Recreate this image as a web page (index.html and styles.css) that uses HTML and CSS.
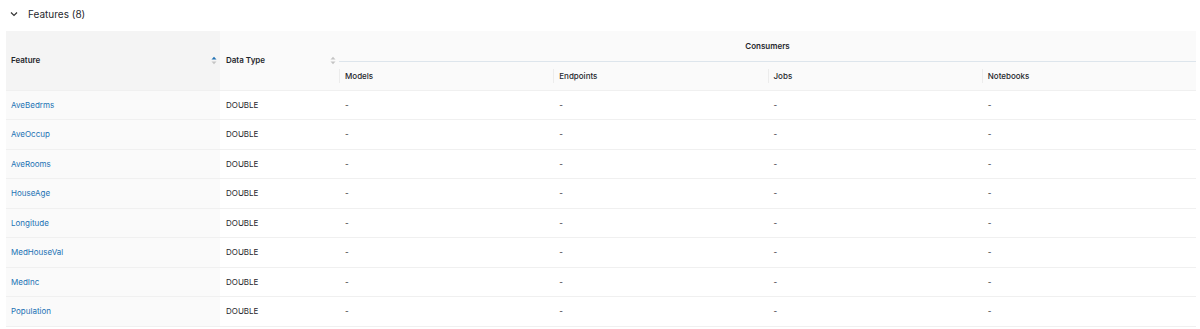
FILE: index.html
```html
<!DOCTYPE html>
<html lang="en">
<head>
  <meta charset="UTF-8">
  <meta name="viewport" content="width=device-width, initial-scale=1.0">
  <title>Features</title>
  <link rel="stylesheet" href="styles.css">
</head>
<body>
  <div class="section-head">
    <svg class="chevron" width="8" height="6" viewBox="0 0 8 6"><path d="M1 1.5 L4 4.5 L7 1.5" fill="none" stroke="#333" stroke-width="1.2"/></svg>
    <span>Features (8)</span>
  </div>

  <table class="features">
    <thead>
      <tr class="head-top">
        <th rowspan="2" class="col-feature sorted">
          <div class="th-inner">Feature
            <svg class="sorter" width="6" height="9" viewBox="0 0 6 9"><path d="M0.5 3.5 L3 0.8 L5.5 3.5 Z" fill="#2272b4"/><path d="M0.5 5.5 L3 8.2 L5.5 5.5 Z" fill="#c4c4c4"/></svg>
          </div>
        </th>
        <th rowspan="2" class="col-type">
          <div class="th-inner">Data Type
            <svg class="sorter" width="6" height="9" viewBox="0 0 6 9"><path d="M0.5 3.5 L3 0.8 L5.5 3.5 Z" fill="#c4c4c4"/><path d="M0.5 5.5 L3 8.2 L5.5 5.5 Z" fill="#c4c4c4"/></svg>
          </div>
        </th>
        <th colspan="4" class="group">Consumers</th>
      </tr>
      <tr class="head-sub">
        <th class="sub first">Models</th>
        <th class="sub">Endpoints</th>
        <th class="sub">Jobs</th>
        <th class="sub">Notebooks</th>
      </tr>
    </thead>
    <tbody id="rows"></tbody>
  </table>

  <script>
    const features = ["AveBedrms", "AveOccup", "AveRooms", "HouseAge", "Longitude", "MedHouseVal", "MedInc", "Population"];
    const tbody = document.getElementById("rows");

    features.forEach((name) => {
      const tr = document.createElement("tr");
      tr.innerHTML = `
        <td class="col-feature sorted"><a href="#">${name}</a></td>
        <td>DOUBLE</td>
        <td>-</td>
        <td>-</td>
        <td>-</td>
        <td>-</td>`;
      tbody.appendChild(tr);
    });
  </script>
</body>
</html>
```

FILE: styles.css
```css
* {
  box-sizing: border-box;
}

body {
  margin: 0;
  padding: 0 4px 0 6px;
  font-family: Inter, 'Liberation Sans', sans-serif;
  background-color: #ffffff;
  color: #1f272d;
}

.section-head {
  display: flex;
  align-items: center;
  height: 27px;
  padding-left: 4px;
  font-size: 10px;
  color: #1f272d;
}

.chevron {
  margin-right: 10px;
  margin-top: 1px;
}

.features {
  width: 1190px;
  border-collapse: collapse;
  table-layout: fixed;
  font-size: 8px;
  margin-top: 4px;
}

.features th {
  background-color: #fafafa;
  font-weight: 600;
  text-align: left;
  color: #1f272d;
  padding: 0 6px;
}

.features th.sorted {
  background-color: #f4f4f4;
}

.col-feature {
  width: 214px;
}

.col-type {
  width: 119px;
}

.th-inner {
  display: flex;
  align-items: center;
  justify-content: space-between;
}

.head-top th {
  height: 30px;
}

.head-top th.col-feature,
.head-top th.col-type {
  border-bottom: 1px solid #f0f0f0;
}

.features th.col-feature {
  padding-left: 5px;
}

.sorter {
  margin-right: -3px;
}

.group {
  text-align: center !important;
  border-bottom: 1px solid #dde5ec;
}

.head-sub th {
  height: 29px;
  font-weight: 500;
  border-bottom: 1px solid #f0f0f0;
  position: relative;
}

.head-sub th.sub::before {
  content: "";
  position: absolute;
  left: 0;
  top: 7px;
  bottom: 7px;
  width: 1px;
  background-color: #ececec;
}

.features td {
  height: 29.5px;
  padding: 0 6px;
  border-bottom: 1px solid #f0f0f0;
  color: #1f272d;
}

.features td.sorted {
  background-color: #fafafa;
  padding-left: 5px;
}

.features a {
  color: #2272b4;
  text-decoration: none;
}
```
